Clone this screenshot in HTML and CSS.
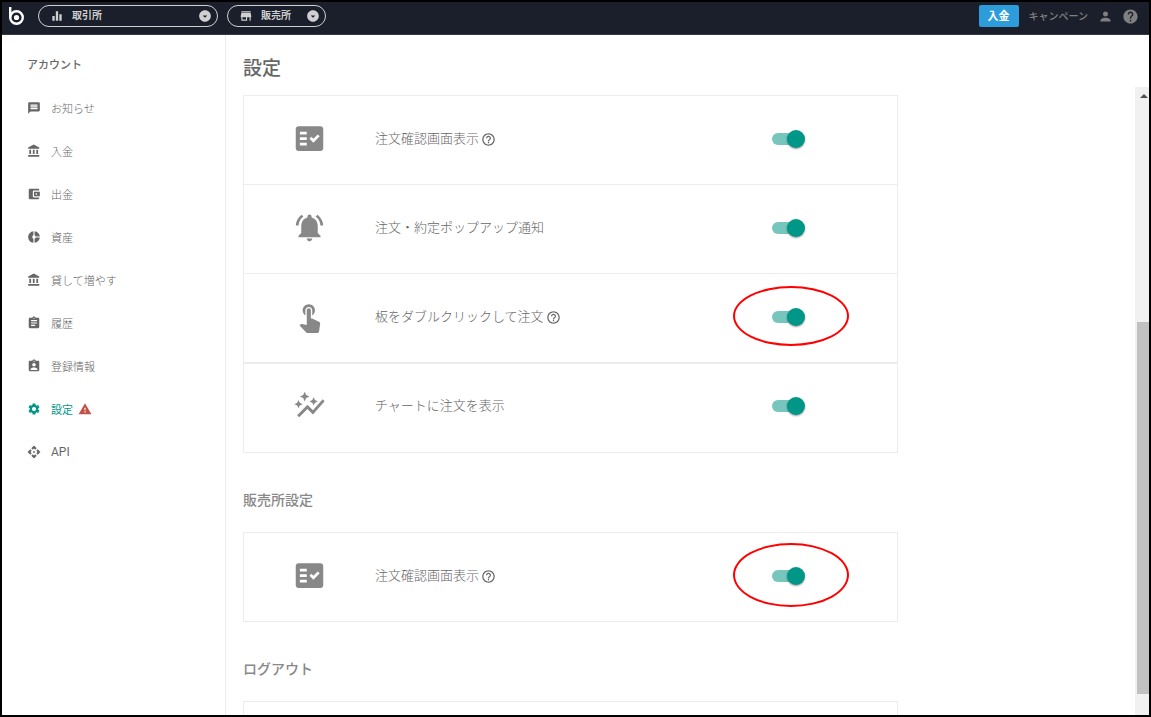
FILE: index.html
```html
<!DOCTYPE html>
<html lang="ja">
<head>
<meta charset="utf-8">
<meta name="viewport" content="width=device-width, initial-scale=1">
<title>設定</title>
<link rel="stylesheet" href="styles.css">
</head>
<body>
<svg class="sprite" aria-hidden="true">
  <symbol id="message" viewBox="0 0 24 24"><path d="M20 2H4c-1.1 0-1.99.9-1.99 2L2 22l4-4h14c1.1 0 2-.9 2-2V4c0-1.1-.9-2-2-2zm-2 12H6v-2h12v2zm0-3H6V9h12v2zm0-3H6V6h12v2z"/></symbol>
  <symbol id="bank" viewBox="0 0 24 24"><path d="M4 10v7h3v-7H4zm6 0v7h3v-7h-3zM2 22h19v-3H2v3zm14-12v7h3v-7h-3zm-4.5-9L2 6v2h19V6l-9.5-5z"/></symbol>
  <symbol id="wallet" viewBox="0 0 24 24"><path d="M21 18v1c0 1.1-.9 2-2 2H5c-1.11 0-2-.9-2-2V5c0-1.1.89-2 2-2h14c1.1 0 2 .9 2 2v1h-9c-1.11 0-2 .9-2 2v8c0 1.1.89 2 2 2h9zm-9-2h10V8H12v8zm4-2.5c-.83 0-1.5-.67-1.5-1.5s.67-1.5 1.5-1.5 1.5.67 1.5 1.5-.67 1.5-1.5 1.5z"/></symbol>
  <symbol id="donut" viewBox="0 0 24 24"><path d="M11 9.16V2c-5 .5-9 4.79-9 10s4 9.5 9 10v-7.16c-1-.41-2-1.52-2-2.84s1-2.43 2-2.84zM14.86 11H22c-.48-4.75-4-8.53-9-9v7.16c1 .3 1.52.98 1.86 1.84zM13 14.84V22c5-.47 8.52-4.25 9-9h-7.14c-.34.86-.86 1.54-1.86 1.84z"/></symbol>
  <symbol id="clipboard" viewBox="0 0 24 24"><path d="M19 3h-4.18C14.4 1.84 13.3 1 12 1c-1.3 0-2.4.84-2.82 2H5c-1.1 0-2 .9-2 2v14c0 1.1.9 2 2 2h14c1.1 0 2-.9 2-2V5c0-1.1-.9-2-2-2zm-7 0c.55 0 1 .45 1 1s-.45 1-1 1-1-.45-1-1 .45-1 1-1zm2 14H7v-2h7v2zm3-4H7v-2h10v2zm0-4H7V7h10v2z"/></symbol>
  <symbol id="profile" viewBox="0 0 24 24"><path d="M19 3h-4.18C14.4 1.84 13.3 1 12 1c-1.3 0-2.4.84-2.82 2H5c-1.1 0-2 .9-2 2v14c0 1.1.9 2 2 2h14c1.1 0 2-.9 2-2V5c0-1.1-.9-2-2-2zm-7 0c.55 0 1 .45 1 1s-.45 1-1 1-1-.45-1-1 .45-1 1-1zm0 4c1.66 0 3 1.34 3 3s-1.34 3-3 3-3-1.34-3-3 1.34-3 3-3zm6 12H6v-1.4c0-2 4-3.1 6-3.1s6 1.1 6 3.1V19z"/></symbol>
  <symbol id="gear" viewBox="0 0 24 24"><path d="M19.14 12.94c.04-.3.06-.61.06-.94 0-.32-.02-.64-.07-.94l2.03-1.58c.18-.14.23-.41.12-.61l-1.92-3.32c-.12-.22-.37-.29-.59-.22l-2.39.96c-.5-.38-1.03-.7-1.62-.94l-.36-2.54c-.04-.24-.24-.41-.48-.41h-3.84c-.24 0-.43.17-.47.41l-.36 2.54c-.59.24-1.13.57-1.62.94l-2.39-.96c-.22-.08-.47 0-.59.22L2.74 8.87c-.12.21-.08.47.12.61l2.03 1.58c-.05.3-.09.63-.09.94s.02.64.07.94l-2.03 1.58c-.18.14-.23.41-.12.61l1.92 3.32c.12.22.37.29.59.22l2.39-.96c.5.38 1.03.7 1.62.94l.36 2.54c.05.24.24.41.48.41h3.84c.24 0 .44-.17.47-.41l.36-2.54c.59-.24 1.13-.56 1.62-.94l2.39.96c.22.08.47 0 .59-.22l1.92-3.32c.12-.22.07-.47-.12-.61l-2.01-1.58zM12 15.6c-1.98 0-3.6-1.62-3.6-3.6s1.62-3.6 3.6-3.6 3.6 1.62 3.6 3.6-1.62 3.6-3.6 3.6z"/></symbol>
  <symbol id="warning" viewBox="0 0 24 24"><path d="M1 21h22L12 2 1 21zm12-3h-2v-2h2v2zm0-4h-2v-4h2v4z"/></symbol>
  <symbol id="api" viewBox="0 0 24 24"><path d="M14 12l-2 2-2-2 2-2 2 2zm-2-6l2.12 2.12 2.5-2.5L12 1 7.38 5.62l2.5 2.5L12 6zm-6 6l2.12-2.12-2.5-2.5L1 12l4.62 4.62 2.5-2.5L6 12zm12 0l-2.12 2.12 2.5 2.5L23 12l-4.62-4.62-2.5 2.5L18 12zm-6 6l-2.12-2.12-2.5 2.5L12 23l4.62-4.62-2.5-2.5L12 18z"/></symbol>
  <symbol id="check-list" viewBox="0 0 24 24"><path d="M20 3H4c-1.1 0-2 .9-2 2v14c0 1.1.9 2 2 2h16c1.1 0 2-.9 2-2V5c0-1.1-.9-2-2-2zM10 17H5v-2h5v2zm0-4H5v-2h5v2zm0-4H5V7h5v2zm4.82 6L12 12.16l1.41-1.41 1.41 1.42L17.99 9l1.42 1.42L14.82 15z"/></symbol>
  <symbol id="bell" viewBox="0 0 24 24"><path d="M7.58 4.08L6.15 2.65C3.75 4.48 2.17 7.3 2.03 10.5h2c.15-2.65 1.51-4.97 3.55-6.42zm12.39 6.42h2c-.15-3.2-1.73-6.02-4.12-7.85l-1.42 1.43c2.02 1.45 3.39 3.77 3.54 6.42zM18 11c0-3.07-1.64-5.64-4.5-6.32V4c0-.83-.67-1.5-1.5-1.5s-1.5.67-1.5 1.5v.68C7.63 5.36 6 7.92 6 11v5l-2 2v1h16v-1l-2-2v-5zm-6 11c.14 0 .27-.01.4-.04.65-.14 1.18-.58 1.44-1.18.1-.24.15-.5.15-.78h-4c.01 1.1.9 2 2.01 2z"/></symbol>
  <symbol id="touch" viewBox="0 0 24 24"><path d="M9 11.24V7.5C9 6.12 10.12 5 11.5 5S14 6.12 14 7.5v3.74c1.21-.81 2-2.18 2-3.74C16 5.01 13.99 3 11.5 3S7 5.01 7 7.5c0 1.56.79 2.93 2 3.74zm9.84 4.63l-4.54-2.26c-.17-.07-.35-.11-.54-.11H13v-6c0-.83-.67-1.5-1.5-1.5S10 6.67 10 7.5v10.74l-3.43-.72c-.08-.01-.15-.03-.24-.03-.31 0-.59.13-.79.33l-.79.8 4.94 4.94c.27.27.65.44 1.06.44h6.79c.75 0 1.33-.55 1.44-1.28l.75-5.27c.01-.07.02-.14.02-.2 0-.62-.38-1.16-.91-1.38z"/></symbol>
  <symbol id="graph" viewBox="0 0 24 24"><path d="M14.06 9.94L12 9l2.06-.94L15 6l.94 2.06L18 9l-2.06.94L15 12l-.94-2.06zM4 14l.94-2.06L7 11l-2.06-.94L4 8l-.94 2.06L1 11l2.06.94L4 14zm4.5-5l1.09-2.41L12 5.5 9.59 4.41 8.5 2 7.41 4.41 5 5.5l2.41 1.09L8.5 9zm-4 11.5l6-6.01 4 4L23 8.93l-1.41-1.41-7.09 7.97-4-4L3 19l1.5 1.5z"/></symbol>
  <symbol id="help" viewBox="0 0 24 24"><path d="M12 2C6.48 2 2 6.48 2 12s4.48 10 10 10 10-4.48 10-10S17.52 2 12 2zm1 17h-2v-2h2v2zm2.07-7.75l-.9.92C13.45 12.9 13 13.5 13 15h-2v-.5c0-1.1.45-2.1 1.17-2.83l1.24-1.26c.37-.36.59-.86.59-1.41 0-1.1-.9-2-2-2s-2 .9-2 2H8c0-2.21 1.79-4 4-4s4 1.79 4 4c0 .88-.36 1.68-.93 2.25z"/></symbol>
  <symbol id="help-outline" viewBox="0 0 24 24"><path d="M11 18h2v-2h-2v2zm1-16C6.48 2 2 6.48 2 12s4.48 10 10 10 10-4.48 10-10S17.52 2 12 2zm0 18c-4.41 0-8-3.59-8-8s3.59-8 8-8 8 3.59 8 8-3.59 8-8 8zm0-14c-2.21 0-4 1.79-4 4h2c0-1.1.9-2 2-2s2 .9 2 2c0 2-3 1.75-3 5h2c0-2.25 3-2.5 3-5 0-2.21-1.79-4-4-4z"/></symbol>
  <symbol id="person" viewBox="0 0 24 24"><path d="M12 12c2.21 0 4-1.79 4-4s-1.79-4-4-4-4 1.79-4 4 1.79 4 4 4zm0 2c-2.67 0-8 1.34-8 4v2h16v-2c0-2.66-5.33-4-8-4z"/></symbol>
  <symbol id="store" viewBox="0 0 24 24"><path d="M20 4H4v2h16V4zm1 10v-2l-1-5H4l-1 5v2h1v6h10v-6h4v6h2v-6h1zm-9 4H6v-4h6v4z"/></symbol>
  <symbol id="bars" viewBox="0 0 24 24"><path d="M10 20h4V4h-4v16zm-6 0h4v-8H4v8zM16 9v11h4V9h-4z"/></symbol>
  <symbol id="dropdown" viewBox="0 0 24 24"><path d="M12 2C6.48 2 2 6.48 2 12s4.48 10 10 10 10-4.48 10-10S17.52 2 12 2zm0 13l-4-4h8l-4 4z"/></symbol>
</svg>

<header class="topbar">
  <a class="logo" href="#" aria-label="ホーム">
    <svg viewBox="0 0 15 18"><path d="M1.2 0v10.5" stroke="#fff" stroke-width="2.4"/><circle cx="7.5" cy="10.5" r="6.3" fill="none" stroke="#fff" stroke-width="2.4"/><circle cx="7.5" cy="10.5" r="2.6" fill="#fff"/></svg>
  </a>
  <button class="pill pill-wide" type="button"><svg class="icon"><use href="#bars"/></svg><span class="pill-label">取引所</span><svg class="icon"><use href="#dropdown"/></svg></button>
  <button class="pill" type="button"><svg class="icon"><use href="#store"/></svg><span class="pill-label">販売所</span><svg class="icon"><use href="#dropdown"/></svg></button>
  <div class="actions">
    <button class="deposit" type="button">入金</button>
    <a class="campaign" href="#">キャンペーン</a>
    <a class="action-icon" href="#" aria-label="ユーザー"><svg class="icon"><use href="#person"/></svg></a>
    <a class="action-icon" href="#" aria-label="ヘルプ"><svg class="icon icon-help"><use href="#help"/></svg></a>
  </div>
</header>

<div class="page">
  <nav class="sidebar">
    <h2 class="sidebar-title">アカウント</h2>
    <ul class="menu">
      <li><a href="#"><svg class="icon"><use href="#message"/></svg>お知らせ</a></li>
      <li><a href="#"><svg class="icon"><use href="#bank"/></svg>入金</a></li>
      <li><a href="#"><svg class="icon"><use href="#wallet"/></svg>出金</a></li>
      <li><a href="#"><svg class="icon"><use href="#donut"/></svg>資産</a></li>
      <li><a href="#"><svg class="icon"><use href="#bank"/></svg>貸して増やす</a></li>
      <li><a href="#"><svg class="icon"><use href="#clipboard"/></svg>履歴</a></li>
      <li><a href="#"><svg class="icon"><use href="#profile"/></svg>登録情報</a></li>
      <li><a class="active" href="#"><svg class="icon"><use href="#gear"/></svg>設定<svg class="icon alert"><use href="#warning"/></svg></a></li>
      <li><a class="latin" href="#"><svg class="icon"><use href="#api"/></svg>API</a></li>
    </ul>
  </nav>

  <main class="content">
    <h1 class="title">設定</h1>
    <div class="scroll-area">
      <div class="panels">
        <section class="card">
          <div class="row">
            <svg class="row-icon"><use href="#check-list"/></svg>
            <div class="row-text"><label for="confirm">注文確認画面表示</label><button class="hint" type="button" aria-label="説明"><svg class="icon"><use href="#help-outline"/></svg></button></div>
            <span class="switch"><input id="confirm" type="checkbox" checked></span>
          </div>
          <div class="row">
            <svg class="row-icon"><use href="#bell"/></svg>
            <div class="row-text"><label for="popup">注文・約定ポップアップ通知</label></div>
            <span class="switch"><input id="popup" type="checkbox" checked></span>
          </div>
          <div class="row">
            <svg class="row-icon"><use href="#touch"/></svg>
            <div class="row-text"><label for="double">板をダブルクリックして注文</label><button class="hint" type="button" aria-label="説明"><svg class="icon"><use href="#help-outline"/></svg></button></div>
            <span class="switch marked"><input id="double" type="checkbox" checked></span>
          </div>
          <div class="row row-split">
            <svg class="row-icon"><use href="#graph"/></svg>
            <div class="row-text"><label for="chart">チャートに注文を表示</label></div>
            <span class="switch"><input id="chart" type="checkbox" checked></span>
          </div>
        </section>
        <h2 class="section-title">販売所設定</h2>
        <section class="card">
          <div class="row">
            <svg class="row-icon"><use href="#check-list"/></svg>
            <div class="row-text"><label for="shop-confirm">注文確認画面表示</label><button class="hint" type="button" aria-label="説明"><svg class="icon"><use href="#help-outline"/></svg></button></div>
            <span class="switch marked marked-tall"><input id="shop-confirm" type="checkbox" checked></span>
          </div>
        </section>
        <h2 class="section-title">ログアウト</h2>
        <section class="card"><div class="row"></div></section>
      </div>
      <div class="scrollbar" aria-hidden="true">
        <svg class="scroll-arrow" viewBox="0 0 8 4"><path d="M0 4L4 0l4 4z"/></svg>
        <span class="track-before"></span>
        <span class="thumb"></span>
        <span class="track-after"></span>
      </div>
    </div>
  </main>
</div>
</body>
</html>
```
FILE: styles.css
```css
*, *::before, *::after { box-sizing: border-box; }

body {
  margin: 0;
  height: 100vh;
  display: flex;
  flex-direction: column;
  overflow: hidden;
  border: 2px solid #000;
  background: #fff;
  color: #666;
  font-family: "Noto Sans CJK JP", sans-serif;
  font-size: 13px;
}

a { color: inherit; text-decoration: none; }

button { font: inherit; border: 0; padding: 0; cursor: pointer; }

.sprite { display: none; }

.icon {
  flex: none;
  width: 14px;
  height: 14px;
  fill: currentColor;
}

.topbar {
  flex: none;
  display: flex;
  align-items: flex-start;
  height: 33px;
  padding: 3px 10px 0 7px;
  border-bottom: 1px solid #363a46;
  background: #1a1f2b;
}

.logo { width: 15px; height: 18px; margin: 2px 14px 0 0; }
.logo svg { display: block; width: 15px; height: 18px; }

.pill {
  display: flex;
  align-items: center;
  height: 22px;
  margin-right: 9px;
  padding: 0 5px 0 11px;
  border: 1px solid #d0d0d0;
  border-radius: 11px;
  background: transparent;
  color: #d0d0d0;
  font-size: 10px;
  line-height: 14px;
  font-weight: 700;
}

.pill-wide { width: 180px; }
.pill-label { flex: 1; padding: 0 15px 2px 8px; text-align: left; }

.actions {
  display: flex;
  align-items: center;
  height: 22px;
  margin-left: auto;
  color: #808080;
  font-size: 10px;
}

.deposit {
  width: 40px;
  height: 22px;
  padding-bottom: 2px;
  border-radius: 2px;
  background: #2d9cdb;
  color: #fff;
  font-size: 11px;
  line-height: 16px;
  font-weight: 700;
}

.campaign { margin: 0 10px; padding-bottom: 2px; font-weight: 500; }

.action-icon { display: flex; margin-right: 9px; }
.action-icon:last-child { margin-right: 0; }
.action-icon .icon { width: 15px; height: 15px; }
.action-icon .icon-help { width: 17px; height: 17px; }

.page { flex: 1; min-height: 0; display: flex; }

.sidebar {
  flex: none;
  width: 224px;
  padding: 20px 0 0 25px;
  border-right: 1px solid #ececec;
}

.sidebar-title {
  margin: 0 0 13px;
  font-size: 11px;
  line-height: 18px;
  font-weight: 500;
}

.menu { margin: 0; padding: 0; list-style: none; }

.menu a {
  display: flex;
  align-items: center;
  height: 43px;
  font-size: 11px;
  font-weight: 300;
}

.menu .latin { font-family: Roboto, sans-serif; font-size: 12px; font-weight: 400; }
.menu .icon { margin-right: 10px; }
.menu .active { color: #009688; font-weight: 400; }
.menu .alert { margin-left: 5px; color: #c0524a; }

.content {
  flex: 1;
  min-width: 0;
  display: flex;
  flex-direction: column;
}

.title {
  margin: 0;
  padding: 18px 0 6px 17px;
  font-size: 19px;
  line-height: 28px;
  font-weight: 500;
}

.scroll-area {
  flex: 1;
  min-height: 0;
  display: flex;
}

.panels {
  flex: 1;
  padding: 8px 17px 0;
  overflow: hidden;
}

.card {
  max-width: 655px;
  border: 1px solid #ececec;
}

.row {
  display: flex;
  align-items: center;
  height: 88px;
  padding-bottom: 2px;
}

.row + .row { height: 89px; border-top: 1px solid #ececec; }
.row + .row-split { height: 90px; padding-bottom: 4px; border-top-width: 2px; }

.row-icon {
  flex: none;
  width: 33px;
  height: 33px;
  margin: 0 49px 2px;
  fill: #888;
}

.row-text {
  flex: 1;
  display: flex;
  align-items: center;
  gap: 2px;
  line-height: 20px;
  font-weight: 300;
}

.row-text label { padding-bottom: 2px; }

.hint { display: flex; background: none; color: #666; }
.hint .icon { width: 15px; height: 15px; }

.switch { position: relative; display: flex; margin-right: 92px; }

.switch input {
  appearance: none;
  position: relative;
  width: 33px;
  height: 20px;
  margin: 0;
  cursor: pointer;
}

.switch input::before {
  content: "";
  position: absolute;
  top: 4px;
  left: 0;
  width: 30px;
  height: 12px;
  border-radius: 6px;
  background: #76c6be;
}

.switch input::after {
  content: "";
  position: absolute;
  top: 1px;
  right: 0;
  width: 18px;
  height: 18px;
  border-radius: 50%;
  background: #009688;
  box-shadow: 0 1px 2px rgba(0, 0, 0, 0.4);
}

.marked::after {
  content: "";
  position: absolute;
  top: -21px;
  left: -39px;
  width: 116px;
  height: 60px;
  border: 2px solid #f00;
  border-radius: 50%;
  pointer-events: none;
}

.marked-tall::after { top: -23px; height: 64px; }

.section-title {
  margin: 0;
  padding: 34px 0 20px;
  color: #888;
  font-size: 14px;
  line-height: 25px;
  font-weight: 500;
}

.scrollbar {
  flex: none;
  width: 14px;
  display: flex;
  flex-direction: column;
  background: #f1f1f1;
}

.scroll-arrow { flex: none; width: 8px; height: 4px; margin: 7px 0 7px 5px; fill: #505050; }
.track-before { flex: 217; }
.thumb { flex: 372; margin-left: 2px; background: #c1c1c1; }
.track-after { flex: 21; }
```
